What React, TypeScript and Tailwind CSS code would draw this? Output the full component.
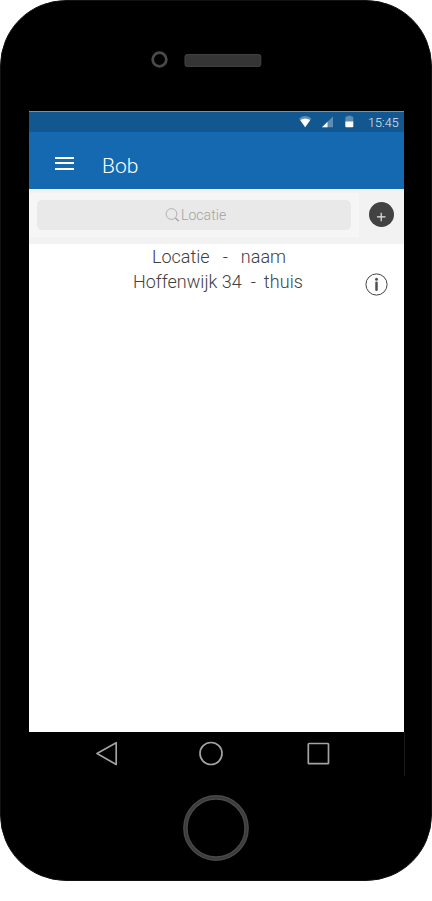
import React from "react";

function StatusBar() {
  return (
    <div className="flex h-[21px] items-center border-t border-[#8d8d90] bg-[#135790] text-white">
      <svg className="ml-[269px] h-5 w-[60px]" viewBox="0 0 60 20" fill="currentColor">
        <path d="M1 6.4Q7.2 1.7 13.4 6.4L7.2 15.2Z" opacity=".32" />
        <path d="M2.2 8Q7.2 4.8 12.2 8L7.2 15.2Z" />
        <path d="M24 15.3 35 4.5v10.8Z" opacity=".32" />
        <path d="M24 15.3 29.5 9.8v5.5Z" />
        <path d="M47.3 10V5.5q0-1 1-1h1V3.8h4v.7h1q1 0 1 1V10Z" opacity=".32" />
        <path d="M47.3 9.5h8v4.8q0 1-1 1h-6q-1 0-1-1Z" />
      </svg>
      <span className="ml-[10px] mt-[2px] text-[12.5px] font-light leading-5 tracking-[0.1px] text-[#e3ebf2]">15:45</span>
    </div>
  );
}

function AppBar() {
  return (
    <div className="flex h-[57px] items-center bg-[#1569b1] text-white">
      <div className="ml-[26px] mt-[5px] flex h-[13px] w-[19px] flex-col justify-between">
        <span className="h-[2px] bg-white" />
        <span className="h-[2px] bg-white" />
        <span className="h-[2px] bg-white" />
      </div>
      <h1 className="ml-[28px] mt-[10px] text-[21px] font-light leading-6">Bob</h1>
    </div>
  );
}

function SearchRow() {
  return (
    <div className="flex h-[55px] items-start bg-[#f2f2f2]">
      <div className="mt-1 h-11 w-[330px] bg-[#f6f6f6] px-2 pt-[7px]">
        <div className="flex h-[30px] items-center rounded-[5px] bg-[#e9e9e9] text-[#a3a3a3]">
          <svg className="ml-[128px] h-4 w-4" viewBox="0 0 16 16" fill="none" stroke="currentColor">
            <circle cx="6.5" cy="7" r="5.4" strokeWidth=".8" />
            <path d="m10.5 11 3.2 3.2" strokeWidth="1.4" />
          </svg>
          <span className="text-[14px] font-light leading-5 tracking-[0.05px]">Locatie</span>
        </div>
      </div>
      <button className="ml-[10px] mt-[13px] h-[25px] w-[25px]" aria-label="Toevoegen">
        <svg className="block" width="25" height="25" viewBox="0 0 25 25">
          <circle cx="12.5" cy="12.5" r="12.5" fill="#424242" />
          <path d="M8 14.8h8.5M12.2 10.7v8.6" stroke="#e6e6e6" strokeWidth="1.2" />
        </svg>
      </button>
    </div>
  );
}

function Locations() {
  return (
    <div className="flex h-[488px] items-start bg-white text-[18px] font-light leading-[25px] text-[#404040]">
      <div className="ml-[104px] w-[172px]">
        <div className="flex pl-[19px]">
          <span>Locatie</span>
          <span className="ml-[13px]">-</span>
          <span className="ml-[13px]">naam</span>
        </div>
        <div className="flex whitespace-nowrap">
          <span>Hoffenwijk 34</span>
          <span className="ml-[9px]">-</span>
          <span className="ml-[8px] tracking-[0.1px]">thuis</span>
        </div>
      </div>
      <svg className="ml-[60px] mt-[29px]" width="24" height="24" viewBox="0 0 24 24">
        <circle cx="11.5" cy="11.5" r="10.6" fill="none" stroke="#444" strokeWidth="1" />
        <circle cx="11.5" cy="6.2" r="1.5" fill="#505050" />
        <path d="M11.5 9.8v7" stroke="#505050" strokeWidth="2.5" strokeLinecap="round" />
      </svg>
    </div>
  );
}

function NavBar() {
  return (
    <div className="h-11 w-[376px] border-r border-[#191919] bg-black">
      <svg width="375" height="44" viewBox="0 0 375 44" fill="none" stroke="#a3a3a3" strokeWidth="1.7" strokeLinejoin="round">
        <path d="M68 21.5 87.2 10.7v21.8Z" />
        <circle cx="182" cy="21.5" r="11" />
        <rect x="279.3" y="11.5" width="20.2" height="20.2" rx=".7" />
      </svg>
    </div>
  );
}

export default function App() {
  return (
    <div className="h-[901px] w-[432px] overflow-hidden bg-white font-['Roboto',sans-serif]">
      <div className="flex h-[881px] flex-col rounded-[66px] border border-[#101212] bg-black">
        <div className="flex h-[110px] shrink-0 items-start">
          <svg className="ml-[150px] mt-[50px]" width="112" height="18" viewBox="0 0 112 18">
            <circle cx="8.5" cy="8.5" r="6.8" fill="none" stroke="#494949" strokeWidth="2.8" />
            <rect x="34" y="3.6" width="75.8" height="11.8" rx="2" fill="#353535" stroke="#444" strokeWidth="1" />
          </svg>
        </div>
        <div className="ml-7 w-[375px] shrink-0">
          <StatusBar />
          <AppBar />
          <SearchRow />
          <Locations />
          <NavBar />
        </div>
        <svg className="ml-[181px] mt-[18px]" width="68" height="68" viewBox="0 0 68 68" fill="none">
          <circle cx="34" cy="34" r="30.6" stroke="#494949" strokeWidth="4.6" />
          <circle cx="34" cy="34" r="30.6" stroke="#3b3b3b" strokeWidth="1.8" />
        </svg>
      </div>
    </div>
  );
}
